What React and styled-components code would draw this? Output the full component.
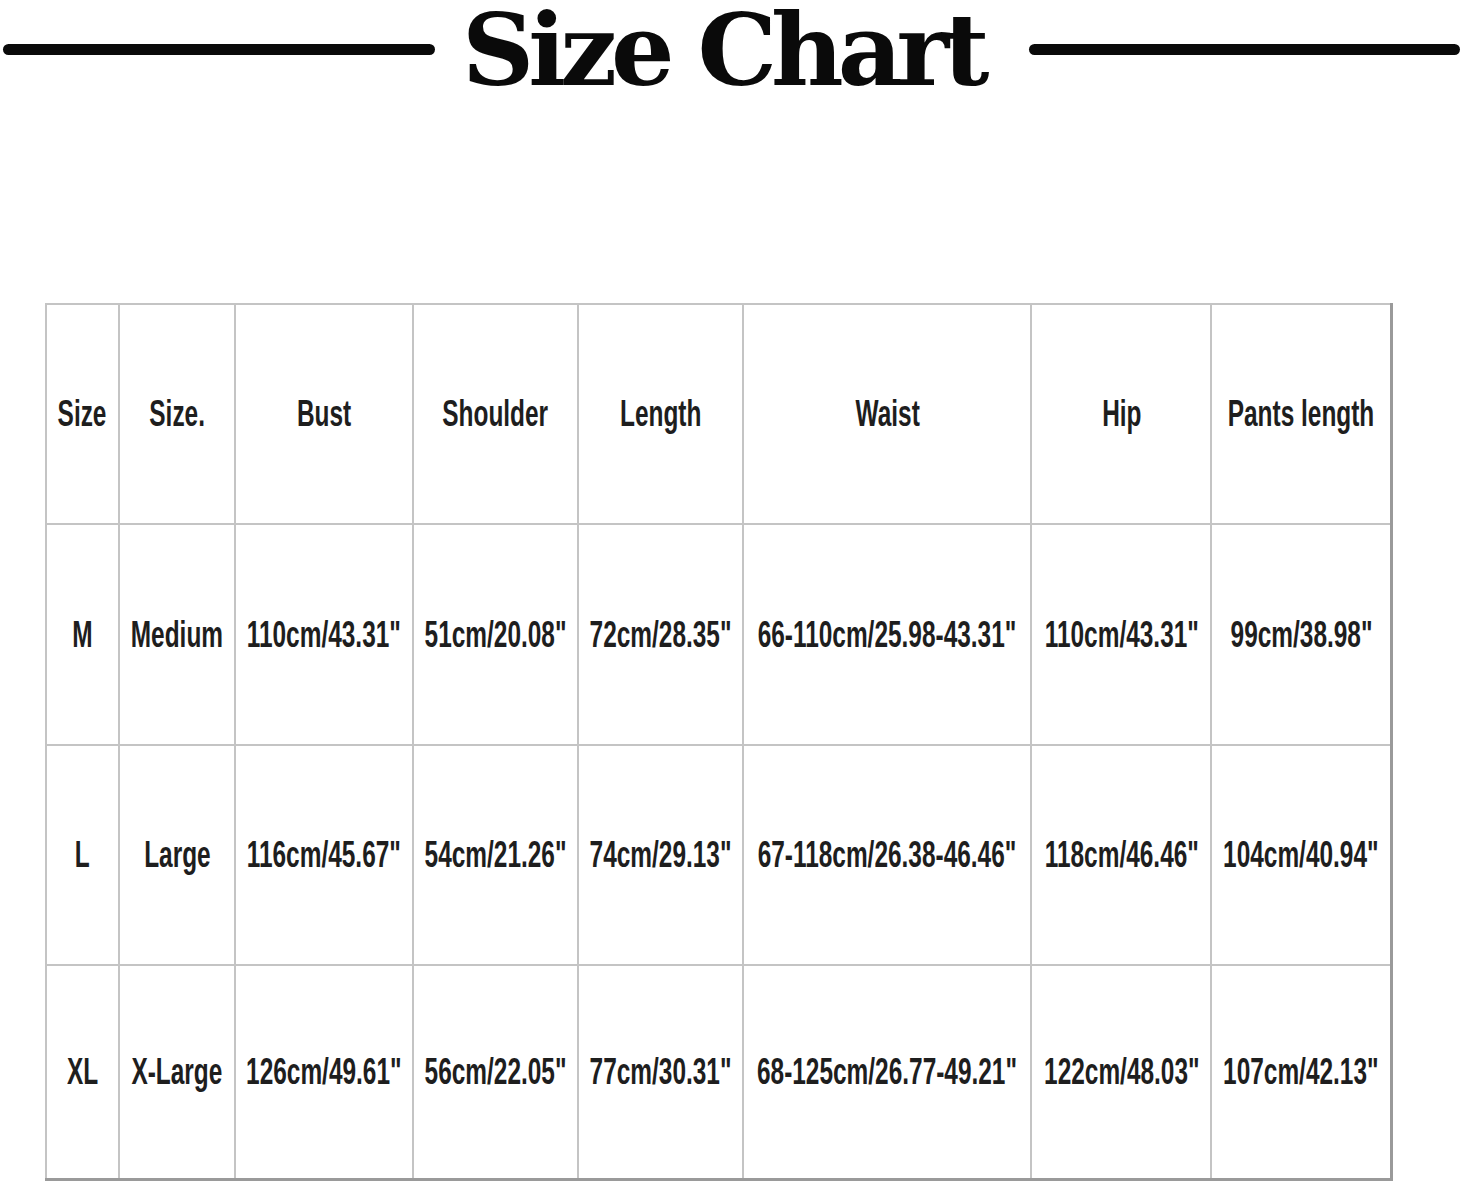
import React from 'react';
import styled, { createGlobalStyle } from 'styled-components';

const GlobalStyle = createGlobalStyle`
  body {
    margin: 0;
    background: #fff;
  }
`;

const columns = [73, 116, 178, 165, 165, 288, 180, 180];
const rowHeights = [220, 221, 220, 214];

const headers = ['Size', 'Size.', 'Bust', 'Shoulder', 'Length', 'Waist', 'Hip', 'Pants length'];

const rows = [
  ['M', 'Medium', '110cm/43.31"', '51cm/20.08"', '72cm/28.35"', '66-110cm/25.98-43.31"', '110cm/43.31"', '99cm/38.98"'],
  ['L', 'Large', '116cm/45.67"', '54cm/21.26"', '74cm/29.13"', '67-118cm/26.38-46.46"', '118cm/46.46"', '104cm/40.94"'],
  ['XL', 'X-Large', '126cm/49.61"', '56cm/22.05"', '77cm/30.31"', '68-125cm/26.77-49.21"', '122cm/48.03"', '107cm/42.13"'],
];

const Page = styled.div`
  width: 1463px;
  height: 1183px;
  overflow: hidden;
`;

const Header = styled.div`
  display: flex;
  align-items: center;
  height: 100px;
  padding: 0 3px;
`;

const Rule = styled.div`
  flex: ${({ $w }) => ($w ? `0 0 ${$w}px` : '1')};
  height: 11px;
  border-radius: 6px;
  background: #0a0a0a;
  margin-top: -2px;
`;

const Title = styled.h1`
  margin: 0 46px 0 27px;
  font-family: 'DejaVu Serif', 'Liberation Serif', serif;
  font-weight: 700;
  font-size: 100px;
  line-height: 100px;
  letter-spacing: -6px;
  color: #0a0a0a;
  white-space: nowrap;
`;

const Table = styled.table`
  margin: 203px 0 0 45px;
  width: 1348px;
  border-collapse: collapse;
  table-layout: fixed;
  border-right: 3px solid #9a9a9a;
  border-bottom: 3px solid #9a9a9a;
`;

const Cell = styled.td`
  border: 2px solid #c4c4c4;
  padding: 0;
  text-align: center;
  vertical-align: middle;
  overflow: visible;
  white-space: nowrap;
`;

/* narrow bold face: scaled Liberation Sans, negative margins keep it centred */
const Label = styled.span`
  display: inline-block;
  margin: 0 -100px;
  font-family: 'Liberation Sans', Arial, sans-serif;
  font-weight: 700;
  font-size: 37px;
  color: #1e1e1e;
  transform: scaleX(0.66);
  transform-origin: center;
`;

const Row = styled.tr`
  height: ${({ $h }) => $h}px;
`;

export default function App() {
  return (
    <Page>
      <GlobalStyle />
      <Header>
        <Rule $w={432} />
        <Title>Size Chart</Title>
        <Rule />
      </Header>
      <Table>
        <colgroup>
          {columns.map((w, i) => (
            <col key={i} style={{ width: w }} />
          ))}
        </colgroup>
        <tbody>
          <Row $h={rowHeights[0]}>
            {headers.map((h) => (
              <Cell key={h}>
                <Label>{h}</Label>
              </Cell>
            ))}
          </Row>
          {rows.map((r, i) => (
            <Row key={r[0]} $h={rowHeights[i + 1]}>
              {r.map((v, j) => (
                <Cell key={j}>
                  <Label>{v}</Label>
                </Cell>
              ))}
            </Row>
          ))}
        </tbody>
      </Table>
    </Page>
  );
}
